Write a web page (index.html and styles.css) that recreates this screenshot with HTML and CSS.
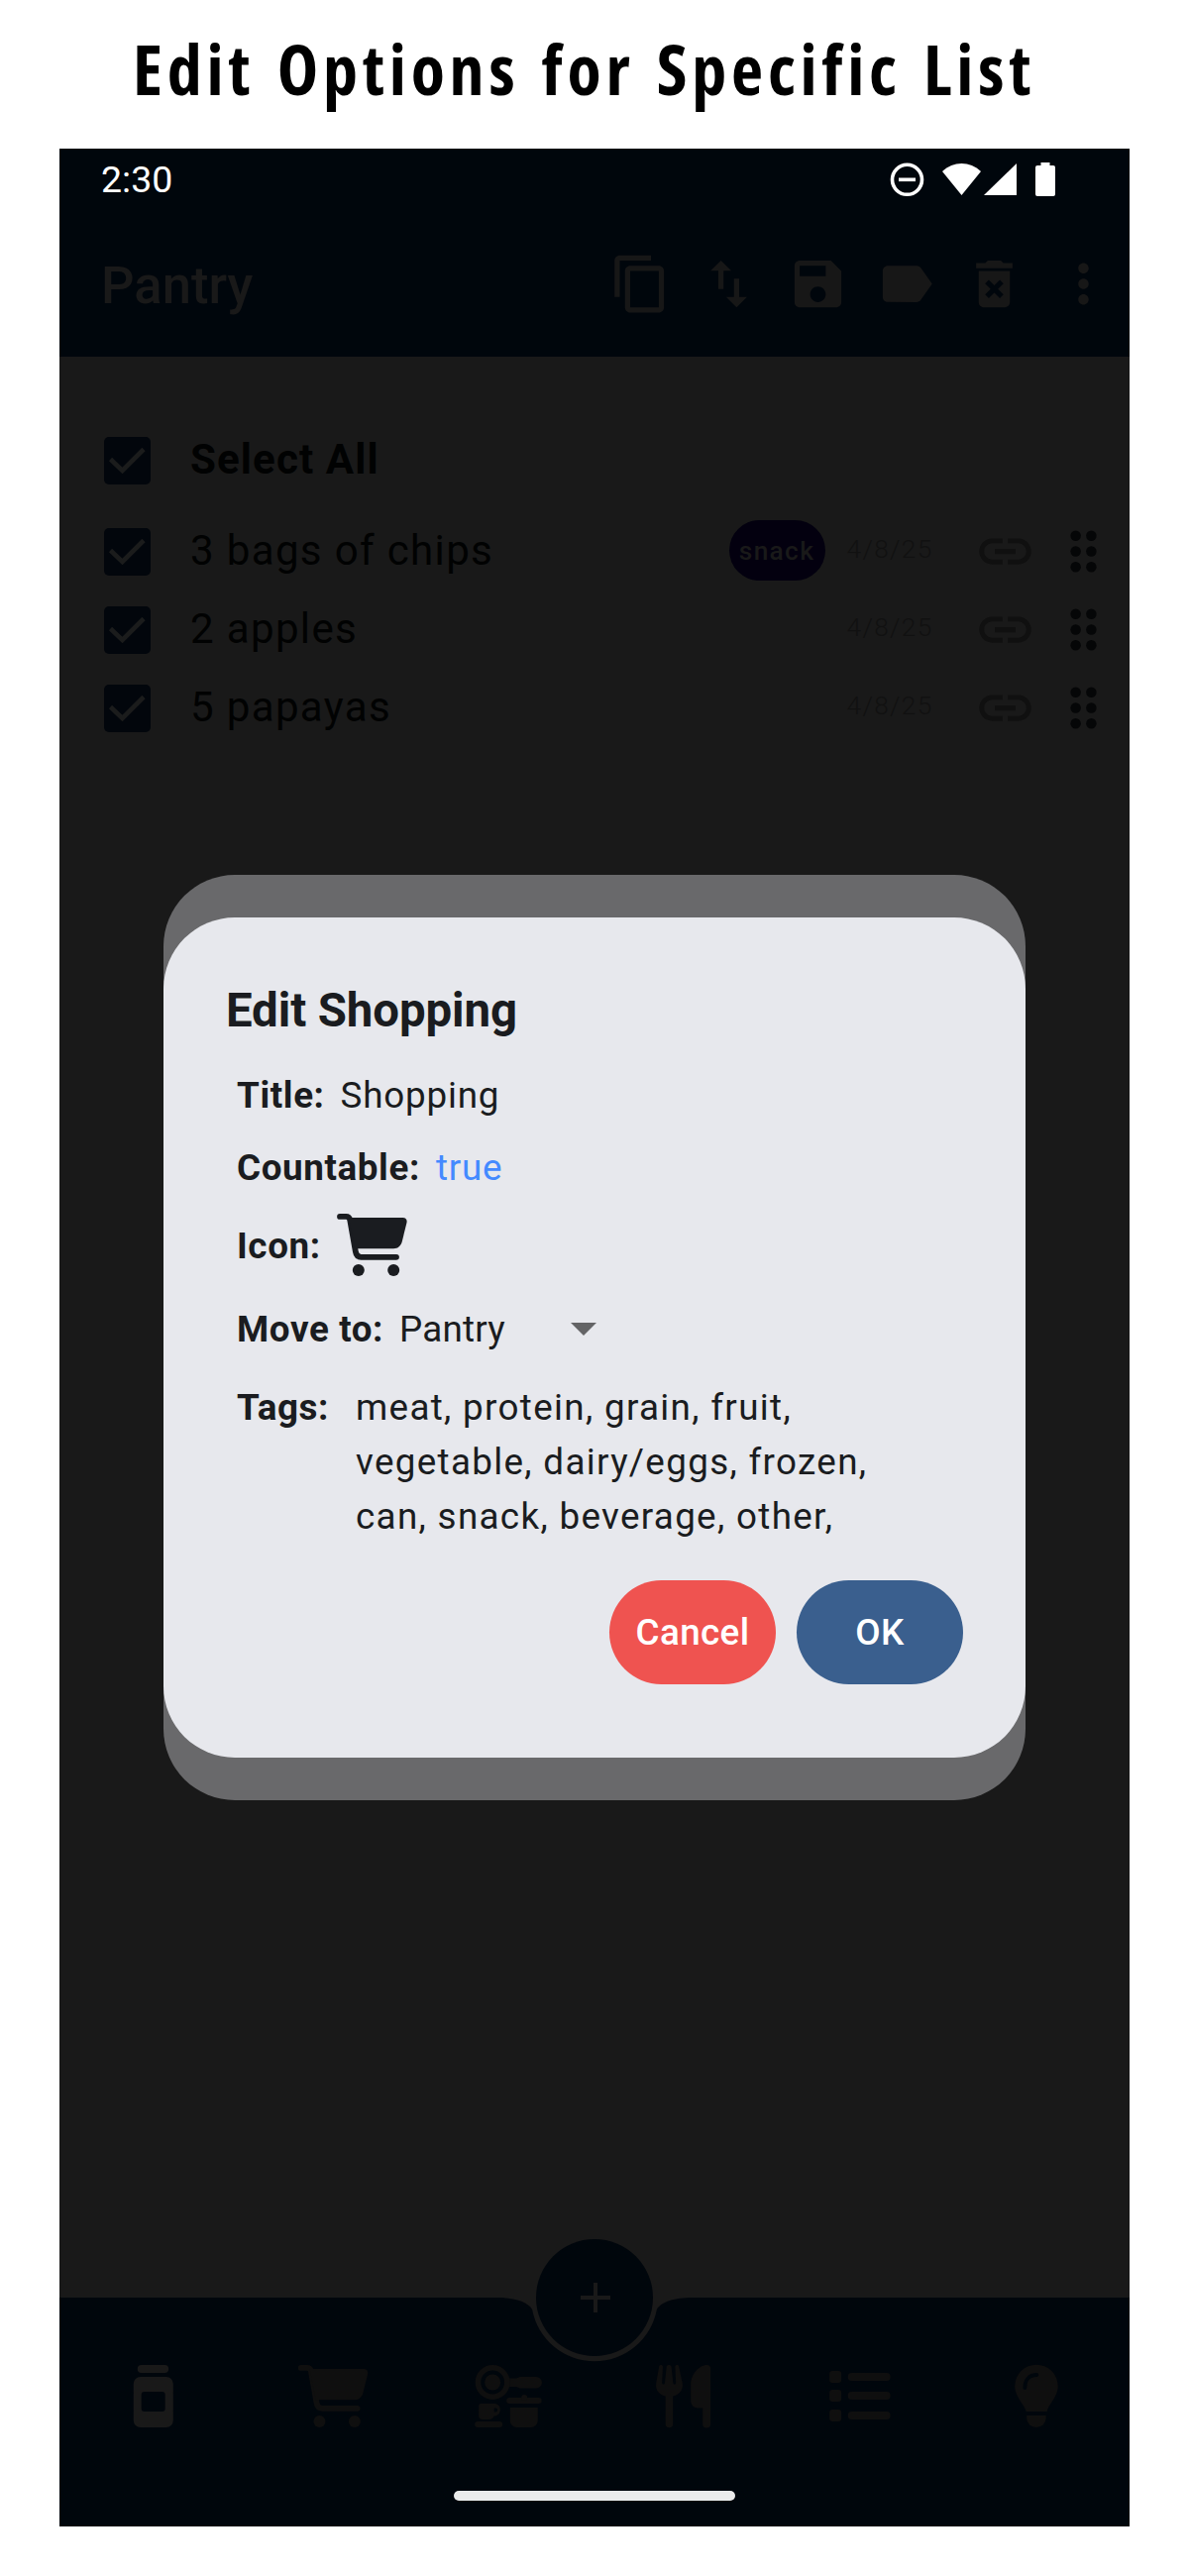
FILE: index.html
```html
<!DOCTYPE html>
<html lang="en">
<head>
<meta charset="utf-8">
<title>Edit Options for Specific List</title>
<link rel="stylesheet" href="styles.css">
</head>
<body>
<svg class="defs" width="0" height="0" aria-hidden="true">
  <symbol id="cart" viewBox="0 0 71 63">
    <path d="M3 2.9h6.2c2 0 3.600 1.200 4 3.300l5.700 32.400c.5 3 2.400 5.200 5.500 5.200H60" fill="none" stroke="currentColor" stroke-width="5.800" stroke-linecap="round"/>
    <path d="M12 4h54.500c3 0 4.600 2.200 4 5l-4.700 19c-1.200 4.600-4.200 7.200-8.600 7.200H18z" fill="currentColor"/>
    <circle cx="21.800" cy="57" r="6" fill="currentColor"/><circle cx="57.200" cy="57" r="6" fill="currentColor"/>
  </symbol>
  <symbol id="link" viewBox="0 0 24 24"><path fill="currentColor" d="M3.900 12c0-1.710 1.390-3.100 3.100-3.100h4V7H7c-2.760 0-5 2.240-5 5s2.240 5 5 5h4v-1.900H7c-1.710 0-3.100-1.390-3.100-3.100zM8 13h8v-2H8v2zm9-6h-4v1.900h4c1.710 0 3.100 1.390 3.100 3.100s-1.390 3.100-3.100 3.100h-4V17h4c2.760 0 5-2.240 5-5s-2.240-5-5-5z"/></symbol>
  <symbol id="grip" viewBox="0 0 24 24"><g fill="currentColor"><circle cx="9" cy="6" r="2"/><circle cx="15" cy="6" r="2"/><circle cx="9" cy="12" r="2"/><circle cx="15" cy="12" r="2"/><circle cx="9" cy="18" r="2"/><circle cx="15" cy="18" r="2"/></g></symbol>
  <symbol id="check" viewBox="0 0 47 48"><rect width="47" height="48" rx="5" fill="#02060c"/><path d="M6.500 22.500L18.500 34 40 12.500" fill="none" stroke="#1b1c1c" stroke-width="4.600"/></symbol>
</svg>

<h1 class="headline">Edit Options for Specific List</h1>

<main class="phone">
  <header class="status">
    <span class="time">2:30</span>
    <svg class="status-icons" viewBox="0 0 168 36">
      <g fill="#fff">
        <circle cx="17.500" cy="18.300" r="15" fill="none" stroke="#fff" stroke-width="3.600"/>
        <path d="M9 16.500h17v3.600H9z"/>
        <path d="M53 10C64 -.8 81 -.8 92 10L72.500 34z"/>
        <path d="M95 34L128 2v32z"/>
        <path d="M152.500 1h9v3h3.500a2 2 0 0 1 2 2v27a2 2 0 0 1-2 2h-16a2 2 0 0 1-2-2V6a2 2 0 0 1 2-2h3.500z"/>
      </g>
    </svg>
  </header>

  <div class="appbar">
    <span class="app-title">Pantry</span>
    <nav class="actions">
      <svg viewBox="0 0 24 24"><path d="M16 1H4c-1.100 0-2 .9-2 2v14h2V3h12V1zm3 4H8c-1.100 0-2 .9-2 2v14c0 1.100.9 2 2 2h11c1.100 0 2-.9 2-2V7c0-1.100-.9-2-2-2zm0 16H8V7h11v14z"/></svg>
      <svg viewBox="0 0 24 24"><path d="M9 3L5 6.990h3V14h2V6.990h3L9 3zm7 14.010V10h-2v7.010h-3L15 21l4-3.990h-3z"/></svg>
      <svg viewBox="0 0 24 24"><path d="M17 3H5c-1.110 0-2 .9-2 2v14c0 1.100.89 2 2 2h14c1.100 0 2-.9 2-2V7l-4-4zm-5 16c-1.660 0-3-1.340-3-3s1.340-3 3-3 3 1.340 3 3-1.340 3-3 3zm3-10H5V5h10v4z"/></svg>
      <svg viewBox="0 0 24 24"><path d="M17.630 5.840C17.270 5.330 16.670 5 16 5L5 5.010C3.900 5.010 3 5.900 3 7v10c0 1.100.9 1.990 2 1.990L16 19c.67 0 1.270-.33 1.630-.84L22 12l-4.370-6.160z"/></svg>
      <svg viewBox="0 0 24 24"><path d="M6 19c0 1.100.9 2 2 2h8c1.100 0 2-.9 2-2V7H6v12zm2.460-7.120l1.410-1.410L12 12.590l2.120-2.120 1.410 1.410L13.410 14l2.120 2.120-1.410 1.410L12 15.410l-2.120 2.120-1.410-1.410L10.590 14l-2.130-2.120zM15.500 4l-1-1h-5l-1 1H5v2h14V4z"/></svg>
      <svg viewBox="0 0 24 24"><path d="M12 8c1.100 0 2-.9 2-2s-.9-2-2-2-2 .9-2 2 .9 2 2 2zm0 2c-1.100 0-2 .9-2 2s.9 2 2 2 2-.9 2-2-.9-2-2-2zm0 6c-1.100 0-2 .9-2 2s.9 2 2 2 2-.9 2-2-.9-2-2-2z"/></svg>
    </nav>
  </div>

  <section class="list">
    <div class="item select-all">
      <svg class="box"><use href="#check"/></svg><span class="name">Select All</span>
    </div>
    <div class="item">
      <svg class="box"><use href="#check"/></svg><span class="name">3 bags of chips</span>
      <span class="tag">snack</span><span class="date">4/8/25</span>
      <svg class="link"><use href="#link"/></svg><svg class="grip"><use href="#grip"/></svg>
    </div>
    <div class="item">
      <svg class="box"><use href="#check"/></svg><span class="name">2 apples</span>
      <span class="date">4/8/25</span>
      <svg class="link"><use href="#link"/></svg><svg class="grip"><use href="#grip"/></svg>
    </div>
    <div class="item">
      <svg class="box"><use href="#check"/></svg><span class="name">5 papayas</span>
      <span class="date">4/8/25</span>
      <svg class="link"><use href="#link"/></svg><svg class="grip"><use href="#grip"/></svg>
    </div>
  </section>

  <footer class="bottom">
    <svg class="bottom-shape" viewBox="0 0 1080 231"><path fill="#00060c" d="M0 0H442C458 0 473 4 477.100 12A64 64 0 0 0 602.900 12C607 4 622 0 638 0H1080V231H0z"/></svg>
    <div class="fab"><svg viewBox="0 0 30 30"><path d="M15 0v30M0 15h30" stroke="#191919" stroke-width="4"/></svg></div>
    <nav class="tabs">
      <svg class="active" viewBox="0 0 72 64"><rect x="20.600" width="31.400" height="8" rx="4"/><path fill-rule="evenodd" d="M23.600 12h26a7 7 0 0 1 7 7v37a7 7 0 0 1-7 7h-26a7 7 0 0 1-7-7V19a7 7 0 0 1 7-7zM27.500 27a3 3 0 0 0-3 3v14a3 3 0 0 0 3 3h18a3 3 0 0 0 3-3V30a3 3 0 0 0-3-3z"/></svg>
      <svg viewBox="0 0 72 64"><use href="#cart" x="4.500" width="71" height="63"/></svg>
      <svg viewBox="0 0 72 64">
        <circle cx="22" cy="17.500" r="14.700" fill="none" stroke="currentColor" stroke-width="5.600"/><circle cx="22" cy="17.500" r="8"/>
        <path d="M39 13.500h7l3.500-1.500H66a5.500 5.500 0 0 1 0 11.500H49.500L46 22h-7z"/>
        <rect x="36" y="33" width="35.500" height="6" rx="3"/><circle cx="54" cy="33" r="3"/>
        <path d="M39.600 43h28v13a7 7 0 0 1-7 7h-14a7 7 0 0 1-7-7z"/>
        <path fill-rule="evenodd" d="M10 39h15a6.500 6.500 0 0 1 0 12.500h-1.500c-.8 2.200-2.500 3.500-5 3.500H12a4 4 0 0 1-4-4V41a2 2 0 0 1 2-2zM23.500 43.500v4H25a2 2 0 0 0 0-4z"/>
        <rect x="4" y="57" width="28" height="6" rx="3"/>
      </svg>
      <svg viewBox="0 0 72 64">
        <path d="M12 1.500c.5-2 3.800-2 3.800.5l-.8 16c.3 2 2.600 2 2.800 0L19.600 1.500c.4-2 4.400-2 4.800 0L26.200 18c.2 2 2.500 2 2.800 0L28.200 2c0-2.500 3.300-2.500 3.800-.5l3.600 17c1.200 7-4 12-9.600 13v28a3.700 3.700 0 0 1-7.500 0v-28c-5.500-1-10.700-6-9.500-13z"/>
        <path d="M60 0a4 4 0 0 1 4 4v55.500a4 4 0 0 1-8 0V43.500h-5a7 7 0 0 1-7-7V20C44 9 53 0 60 0z"/>
      </svg>
      <svg viewBox="0 0 72 64"><rect x="6" y="6" width="12" height="12" rx="3"/><rect x="6" y="25" width="12" height="12" rx="3"/><rect x="6" y="45" width="12" height="12" rx="3"/><rect x="24.500" y="8" width="43" height="8" rx="4"/><rect x="24.500" y="27" width="43" height="8" rx="4"/><rect x="24.500" y="47" width="43" height="8" rx="4"/></svg>
      <svg viewBox="0 0 72 64"><path d="M25.500 47c-1.800-7.500-11.500-15-11.500-25.500a21.800 21.800 0 0 1 43.600 0C57.600 32 48 39.500 46.500 47z"/><path d="M24.200 23c0-8 4.500-13 12-13" fill="none" stroke="#00060c" stroke-width="3.800" stroke-linecap="round"/><path d="M26 51h19.500v2.500a9.700 9.500 0 0 1-19.500 0z"/></svg>
    </nav>
    <div class="home"></div>
  </footer>

  <div class="dialog-back">
    <section class="dialog">
      <h2>Edit Shopping</h2>
      <div class="field"><b>Title:</b><span>Shopping</span></div>
      <div class="field"><b>Countable:</b><span class="bool">true</span></div>
      <div class="field icon-field"><b>Icon:</b><svg class="cart"><use href="#cart"/></svg></div>
      <div class="field move-field"><b>Move to:</b><span class="choice">Pantry</span><svg class="caret" viewBox="0 0 26 13"><path d="M0 0h26L13 13z" fill="#646466"/></svg></div>
      <div class="field tags-field"><b>Tags:</b><p>meat, protein, grain, fruit, vegetable, dairy/eggs, frozen, can, snack, beverage, other,</p></div>
      <div class="buttons"><button class="cancel">Cancel</button><button class="ok">OK</button></div>
    </section>
  </div>
</main>
</body>
</html>
```

FILE: styles.css
```css
* { box-sizing: border-box; margin: 0; padding: 0; }
body { width: 1200px; height: 2600px; background: #fff; font-family: Roboto, "Liberation Sans", sans-serif; }
svg { display: block; flex: none; }
.defs { position: absolute; }
.headline {
  height: 150px; padding: 9px 0 0 134px; white-space: nowrap; color: #000;
  font: 700 70px/120px "Open Sans", "Noto Sans", sans-serif; font-stretch: 75%; letter-spacing: 4.8px; word-spacing: 5px;
}
.phone {
  position: relative; display: flex; flex-direction: column;
  width: 1080px; height: 2400px; margin: 0 60px; background: #191919;
}

.status { display: flex; align-items: center; justify-content: space-between; height: 62px; padding: 0 74px 0 42px; background: #00060c; }
.time { color: #fff; font-size: 37.5px; line-height: 62px; }
.status-icons { width: 168px; height: 36px; }

.appbar { display: flex; align-items: center; justify-content: space-between; height: 148px; padding: 0 15.500px 0 42px; background: #00060c; color: #191919; }
.app-title { padding-top: 3px; font-size: 52.6px; font-weight: 500; }
.actions { display: flex; gap: 26.300px; }
.actions svg { width: 63px; height: 63px; fill: #171717; }

.list { flex: 1; padding: 59px 15.500px 0 45px; color: #010202; }
.item { display: flex; align-items: center; height: 79px; }
.select-all { height: 92px; margin-bottom: 6px; font-weight: 700; }
.box { width: 47px; height: 48px; }
.name { flex: 1; padding: 0 0 2px 40px; font-size: 42.1px; letter-spacing: 1.320px; }
.select-all .name { padding-bottom: 4px; letter-spacing: 1.1px; }
.tag {
  display: flex; align-items: center; justify-content: center; width: 97px; height: 61px; margin: 0 22px 2px 0;
  border-radius: 31px; background: #03000f; color: #191919; font-size: 26.3px; font-weight: 500; letter-spacing: 1.320px;
}
.date { width: 87px; margin-right: 41px; padding-bottom: 6px; color: #111; font-size: 26.3px; font-weight: 300; letter-spacing: 1.320px; white-space: nowrap; }
.link { width: 63px; height: 63px; margin-right: 16px; color: #101010; }
.grip { width: 63px; height: 63px; color: #050607; }

.bottom { position: relative; display: flex; flex-direction: column; align-items: center; height: 231px; }
.bottom-shape { position: absolute; inset: 0; width: 1080px; height: 231px; }
.fab {
  position: absolute; left: 481px; top: -59px; display: flex; align-items: center; justify-content: center;
  width: 118px; height: 118px; border-radius: 50%; background: #00060c;
}
.fab svg { width: 30px; height: 30px; margin-left: 2px; }
.tabs { position: relative; display: flex; width: 1070px; margin-top: 68px; color: #0f0f0f; }
.tabs svg { flex: 1; height: 64px; fill: currentColor; overflow: visible; }
.tabs .active { color: #191919; }
.home { position: relative; width: 284px; height: 10px; margin-top: 63px; border-radius: 5px; background: #ebecec; }

.dialog-back { position: absolute; left: 105px; top: 733px; width: 870px; height: 934px; padding: 43px 0; border-radius: 72px; background: #69696b; }
.dialog { height: 848px; padding: 64px 63px 0 62px; border-radius: 72px; background: #e7e8ed; color: #1a1c20; font-size: 36.8px; }
.dialog h2 { margin: 0 0 19px 1px; font-size: 47.4px; line-height: 60px; font-weight: 700; letter-spacing: -.1px; }
.field { display: flex; align-items: center; height: 73px; padding-left: 12px; letter-spacing: .8px; }
.field b { margin-right: 16px; font-weight: 700; letter-spacing: .6px; }
.bool { color: #448aff; }
.icon-field { height: 85px; }
.cart { width: 71px; height: 63px; margin-bottom: 2px; }
.move-field { height: 83px; }
.choice { width: 173px; letter-spacing: .2px; }
.tags-field { align-items: flex-start; height: 165px; margin-top: 10px; line-height: 55px; }
.tags-field b { width: 104px; }
.tags-field p { width: 530px; letter-spacing: 1.320px; }
.caret { width: 26px; height: 13px; }
.buttons { display: flex; justify-content: flex-end; gap: 21px; margin-top: 37px; }
.buttons button { width: 168px; height: 105px; border: 0; border-radius: 53px; color: #fff; font: 500 36.8px Roboto, sans-serif; letter-spacing: .4px; }
.cancel { background: #ef5350; }
.ok { background: #3a5f8e; }
```
